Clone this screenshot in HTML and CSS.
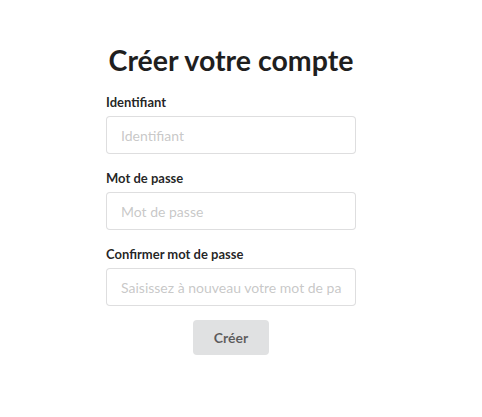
FILE: index.html
```html
<!DOCTYPE html>
<html lang="fr">
<head>
<meta charset="utf-8">
<title>Créer votre compte</title>
<link rel="stylesheet" href="styles.css">
</head>
<body>
<main class="signup">
  <h1 class="signup-title">Créer votre compte</h1>
  <form class="form">
    <div class="field">
      <label class="field-label" for="login">Identifiant</label>
      <input class="field-input" id="login" type="text" placeholder="Identifiant">
    </div>
    <div class="field">
      <label class="field-label" for="pwd">Mot de passe</label>
      <input class="field-input" id="pwd" type="password" placeholder="Mot de passe">
    </div>
    <div class="field">
      <label class="field-label" for="pwd2">Confirmer mot de passe</label>
      <input class="field-input" id="pwd2" type="password" placeholder="Saisissez à nouveau votre mot de passe">
    </div>
    <div class="actions">
      <button class="btn" type="button">Créer</button>
    </div>
  </form>
</main>
</body>
</html>
```
FILE: styles.css
```css
* { box-sizing: border-box; }
html, body {
  margin: 0;
  background: #ffffff;
}
body {
  font-family: Lato, "Helvetica Neue", Arial, sans-serif;
  font-size: 14px;
  color: rgba(0, 0, 0, 0.87);
}
.signup {
  width: 250px;
  margin-left: 106px;
  padding-top: 42px;
}
.signup-title {
  margin: 0 0 14px;
  font-size: 28.5px;
  line-height: 36px;
  font-weight: 700;
  text-align: center;
  white-space: nowrap;
  color: #1f1f1f;
}
.form {
  display: flex;
  flex-direction: column;
}
.field {
  display: flex;
  flex-direction: column;
  margin-bottom: 14px;
}
.field-label {
  display: block;
  height: 20px;
  line-height: 20px;
  margin-bottom: 4px;
  font-size: 13px;
  font-weight: 700;
  color: rgba(0, 0, 0, 0.87);
}
.field-input {
  width: 100%;
  height: 38px;
  padding: 0 13px 0 14px;
  border: 1px solid rgba(34, 36, 38, 0.15);
  border-radius: 4px;
  font-family: Lato, "Helvetica Neue", Arial, sans-serif;
  font-size: 14px;
  color: rgba(0, 0, 0, 0.87);
  background: #fff;
  outline: none;
}
.field-input::placeholder {
  color: rgba(191, 191, 191, 0.87);
}
.actions {
  display: flex;
  justify-content: center;
}
.btn {
  height: 35px;
  padding: 0 21px;
  border: none;
  border-radius: 4px;
  background: #e0e1e2;
  color: rgba(0, 0, 0, 0.6);
  font-family: Lato, "Helvetica Neue", Arial, sans-serif;
  font-size: 14px;
  font-weight: 700;
  cursor: pointer;
}
```
